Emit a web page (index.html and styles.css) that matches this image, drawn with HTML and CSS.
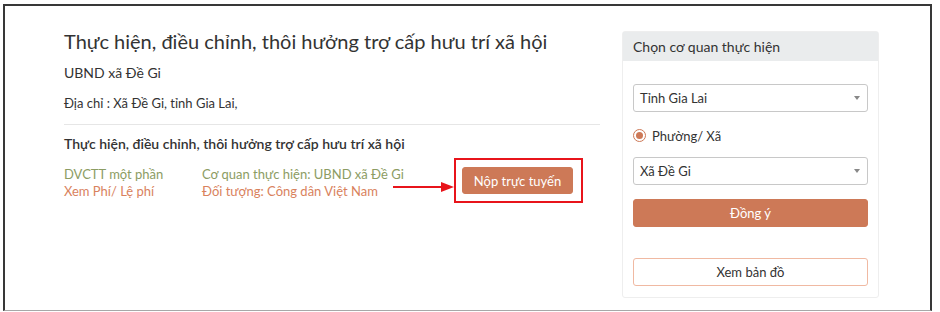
FILE: index.html
```html
<!DOCTYPE html>
<html lang="vi">
<head>
    <meta charset="UTF-8">
    <meta name="viewport" content="width=device-width, initial-scale=1.0">
    <title>Thực hiện, điều chỉnh, thôi hưởng trợ cấp hưu trí xã hội</title>
    <link rel="stylesheet" href="styles.css">
</head>
<body>
    <div class="frame">
        <div class="main">
            <h1 class="title">Thực hiện, điều chỉnh, thôi hưởng trợ cấp hưu trí xã hội</h1>
            <div class="agency">UBND xã Đề Gi</div>
            <div class="address">Địa chỉ : Xã Đề Gi, tỉnh Gia Lai,</div>

            <div class="service">
                <h2 class="service-name">Thực hiện, điều chỉnh, thôi hưởng trợ cấp hưu trí xã hội</h2>
                <div class="service-row">
                    <div class="col col-type">
                        <div class="green">DVCTT một phần</div>
                        <div class="orange">Xem Phí/ Lệ phí</div>
                    </div>
                    <div class="col col-info">
                        <div class="green">Cơ quan thực hiện: UBND xã Đề Gi</div>
                        <div class="orange">Đối tượng: Công dân Việt Nam</div>
                    </div>
                    <svg class="arrow" width="62" height="12" viewBox="0 0 62 12">
                        <line x1="0" y1="6" x2="50" y2="6" stroke="#e8141b" stroke-width="2"/>
                        <polygon points="48,1 61,6 48,11" fill="#e8141b"/>
                    </svg>
                    <div class="highlight">
                        <button class="btn btn-primary btn-submit" type="button">Nộp trực tuyến</button>
                    </div>
                </div>
            </div>
        </div>

        <div class="panel">
            <div class="panel-head">Chọn cơ quan thực hiện</div>
            <div class="panel-body">
                <div class="select">
                    <span>Tỉnh Gia Lai</span>
                    <span class="caret"></span>
                </div>
                <label class="radio">
                    <span class="radio-dot"></span>
                    Phường/ Xã
                </label>
                <div class="select">
                    <span>Xã Đề Gi</span>
                    <span class="caret"></span>
                </div>
                <button class="btn btn-primary btn-block" type="button">Đồng ý</button>
                <button class="btn btn-outline btn-block btn-map" type="button">Xem bản đồ</button>
            </div>
        </div>
    </div>
</body>
</html>
```

FILE: styles.css
```css
body {
    margin: 0;
    background: #fff;
    font-family: Lato, "Open Sans", sans-serif;
    color: #333;
}

.frame {
    margin: 4px 0 0 3px;
    width: 925px;
    height: 304px;
    border: 2px solid #383838;
    border-bottom: 1px solid #a8a8a8;
    display: flex;
    box-sizing: content-box;
}

.main {
    width: 536px;
    padding: 22px 0 0 59px;
}

.title {
    margin: 0;
    font-size: 20px;
    font-weight: 400;
    line-height: 26px;
    color: #333;
}

.agency {
    margin-top: 10px;
    font-size: 14px;
    line-height: 18px;
}

.address {
    margin-top: 12px;
    font-size: 13px;
    line-height: 18px;
}

.service {
    margin-top: 12px;
    border-top: 1px solid #e6e6e6;
    padding-top: 10px;
}

.service-name {
    margin: 0;
    font-size: 14px;
    font-weight: 600;
    line-height: 18px;
    color: #333;
}

.service-row {
    position: relative;
    display: flex;
    align-items: flex-start;
    margin-top: 5px;
}

.col {
    padding-top: 8px;
    font-size: 13px;
    line-height: 17px;
}

.col-type {
    width: 138px;
}

.col-info {
    width: 252px;
}

.green {
    color: #8c9c63;
}

.orange {
    color: #d9825d;
}

.arrow {
    position: absolute;
    left: 329px;
    top: 23px;
}

.highlight {
    border: 2px solid #e8141b;
    padding: 7px 8px 7px 6px;
}

.btn {
    font-family: Lato, "Open Sans", sans-serif;
    font-size: 13px;
    height: 28px;
    border-radius: 3px;
    cursor: pointer;
    display: block;
}

.btn-primary {
    background-color: #cd7957;
    border: 1px solid #cd7957;
    color: #fff;
}

.btn-submit {
    width: 111px;
    height: 27px;
    padding: 0;
}

.panel {
    margin: 25px 0 0 22px;
    width: 255px;
    height: 265px;
    border: 1px solid #eeeeee;
    border-radius: 3px;
    align-self: flex-start;
}

.panel-head {
    height: 29px;
    background: #eaeced;
    padding: 0 10px;
    font-size: 14px;
    line-height: 29px;
    color: #333;
}

.panel-body {
    padding: 23px 10px 0;
}

.select {
    height: 26px;
    border: 1px solid #c8c8c8;
    border-radius: 3px;
    padding: 0 7px 0 6px;
    display: flex;
    align-items: center;
    justify-content: space-between;
    font-size: 13px;
}

.caret {
    width: 0;
    height: 0;
    border-left: 3px solid transparent;
    border-right: 3px solid transparent;
    border-top: 4px solid #888;
}

.radio {
    display: flex;
    align-items: center;
    gap: 6px;
    margin: 16px 0 14px;
    height: 15px;
    font-size: 13px;
}

.radio-dot {
    width: 11px;
    height: 11px;
    border: 1px solid #cd7957;
    border-radius: 50%;
    position: relative;
}

.radio-dot::after {
    content: "";
    position: absolute;
    left: 2px;
    top: 2px;
    width: 7px;
    height: 7px;
    border-radius: 50%;
    background: #cd7957;
}

.btn-block {
    width: 100%;
    height: 28px;
    margin-top: 14px;
}

.btn-outline {
    background: #fff;
    border: 1px solid #f0b9a2;
    color: #333;
}

.btn-map {
    margin-top: 31px;
}
```
